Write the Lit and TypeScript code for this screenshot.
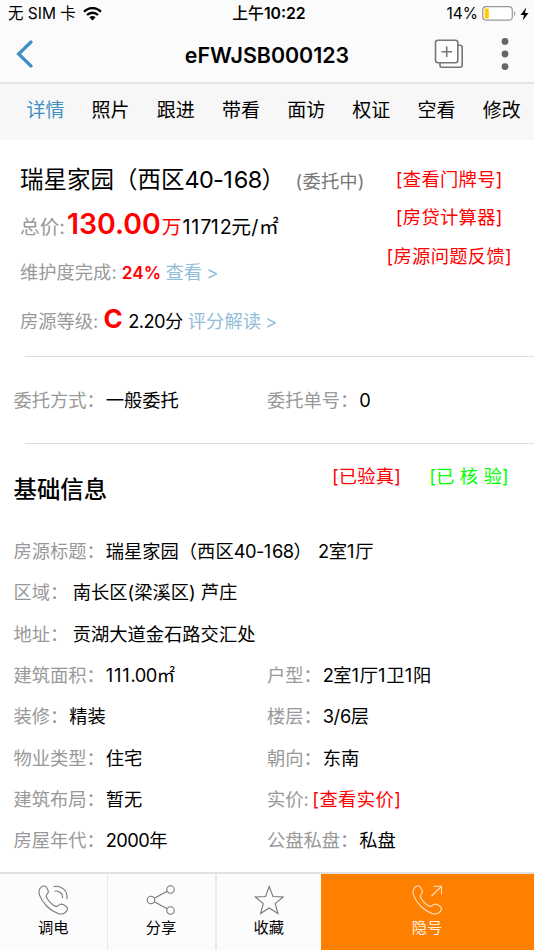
import { LitElement, html, css, svg } from "lit";
import { customElement } from "lit/decorators.js";
import { classMap } from "lit/directives/class-map.js";

type Field = { label: string; value: string; gap?: boolean; link?: boolean };

const TABS = ["详情", "照片", "跟进", "带看", "面访", "权证", "空看", "修改"];

const FIELDS: Field[][] = [
  [{ label: "房源标题：", value: "瑞星家园（西区40-168） 2室1厅" }],
  [{ label: "区域：", value: "南长区(梁溪区) 芦庄", gap: true }],
  [{ label: "地址：", value: "贡湖大道金石路交汇处", gap: true }],
  [{ label: "建筑面积：", value: "111.00㎡" }, { label: "户型：", value: "2室1厅1卫1阳" }],
  [{ label: "装修：", value: "精装" }, { label: "楼层：", value: "3/6层" }],
  [{ label: "物业类型：", value: "住宅" }, { label: "朝向：", value: "东南" }],
  [{ label: "建筑布局：", value: "暂无" }, { label: "实价:", value: "[查看实价]", link: true }],
  [{ label: "房屋年代：", value: "2000年" }, { label: "公盘私盘：", value: "私盘" }],
];

const HANDSET = "M3.2 2.2C5 .7 7.200 .5 8.400 2.200C9.600 4 10.600 6 10.200 7.600C9.800 9 8 9.600 8.200 11.200C8.800 14.600 14.500 20.600 18.200 21.400C19.800 21.600 20.800 19.600 22.400 19.200C24.400 18.700 26.800 20.200 28.400 21.600C30 23.200 29.600 25 28.200 26.600C26.200 28.900 23 29.500 20 28.500C12.600 26.200 4.400 18.200 1.600 10.400C.5 7.200 .8 4.200 3.200 2.200Z";

const ICONS = {
  call: svg`<path d=${HANDSET}/><path d="M15.500 1.800C22.500-.6 30.500 5.800 28.800 14.200M16.600 6.200C21.500 5.200 25.400 9 24.400 13.200"/>`,
  share: svg`<circle cx="5" cy="15" r="3.700"/><circle cx="24.500" cy="4.500" r="3.700"/><circle cx="24.500" cy="25.500" r="3.700"/><path d="M8.300 13.200 21.200 6.300M8.300 16.800 21.200 23.700"/>`,
  star: svg`<path d="M15.200 1.500 19 11.500 29.200 12 21.200 18.700 23.900 28.500 15.200 23 6.600 28.500 9.300 18.700 1.300 12 11.500 11.500Z"/>`,
  out: svg`<path d=${HANDSET}/><path d="M19.500 11 29.500 1.300M21.500 1.200H29.600V9.400"/>`,
};

// Wraps digits so that narrow and wide figures get even spacing.
const figures = (text: string) =>
  text.split(/(1+|[02-9.\-]+)/).filter(Boolean).map((part) =>
    /^1/.test(part) ? html`<span class="one">${part}</span>` : /^[0-9.\-]/.test(part) ? html`<span class="num">${part}</span>` : part
  );

@customElement("app-root")
export class AppRoot extends LitElement {
  static styles = css`
    :host {
      display: flex;
      flex-direction: column;
      height: 950px;
      overflow: hidden;
      background: #fff;
      color: #000;
      font-family: Inter, "Noto Sans CJK SC", sans-serif;
      font-size: 18.3px;
      white-space: nowrap;
    }
    * { box-sizing: border-box; }
    .num { letter-spacing: -.03em; }
    .one { letter-spacing: .045em; }
    .status {
      display: grid;
      grid-template-columns: 1fr auto 1fr;
      align-items: center;
      height: 28px;
      padding: 0 5px 0 8px;
      background: #fbfbfb;
      font-size: 15.500px;
      line-height: 20px;
    }
    .carrier, .power { display: flex; align-items: center; }
    .carrier svg { margin: -1px 0 0 7px; }
    .power { justify-content: flex-end; gap: 4px; }
    .clock { font-size: 15.800px; font-weight: 500; padding-left: 1px; }
    .clock b { font-weight: 600; }
    .nav {
      display: grid;
      grid-template-columns: 1fr auto 1fr;
      align-items: center;
      height: 56px;
      padding-bottom: 2px;
      background: #fbfbfb;
      border-bottom: 2px solid #e3e3e3;
    }
    .back { margin-left: 16px; }
    .title { font-size: 21.400px; font-weight: 600; margin-top: 1px; }
    .tools { display: flex; justify-content: flex-end; align-items: center; gap: 37px; margin-right: 25.500px; }
    .tabs {
      display: flex;
      height: 56px;
      padding-left: 12.800px;
      background: #f7f7f7;
    }
    .tab { flex: 0 0 65.200px; text-align: center; font-size: 19px; line-height: 54px; }
    .tab.on { color: #3e8fc2; }
    .summary {
      display: flex;
      justify-content: space-between;
      height: 216px;
      padding: 20px 22px 0 20px;
    }
    .line { display: flex; align-items: baseline; }
    .l1 { height: 43px; line-height: 40px; }
    .l2 { height: 46px; line-height: 41px; }
    .l3 { height: 46px; line-height: 47px; }
    .l4 { height: 50px; line-height: 47px; }
    .name { font-size: 23.500px; }
    .state { color: #777; margin-left: 10.500px; letter-spacing: .2px; }
    .muted { color: #999; }
    .red { color: #f00; }
    .green { color: #0f0; }
    .mid { font-size: 19.700px; }
    .price { font-size: 28.400px; font-weight: 600; margin: 0 1px 0 2px; }
    .per { margin-left: 1px; letter-spacing: .5px; }
    .strong { font-size: 17.300px; font-weight: 600; margin-left: 5px; }
    .grade { font-size: 26px; font-weight: 700; margin: 0 5.500px 0 5px; }
    .blue { color: #92bdd8; margin-left: 4.500px; word-spacing: -1px; }
    .links { color: #f00; text-align: center; line-height: 38.300px; letter-spacing: .3px; }
    .rule { height: 1px; margin-left: 25px; background: #dedede; }
    .row { display: grid; grid-template-columns: 253.500px 1fr; padding-left: 13.500px; line-height: 41.350px; height: 41.350px; }
    .cell { display: flex; align-items: baseline; }
    .value { margin-left: .8px; word-spacing: 1px; }
    .value.gap { margin-left: 4.300px; word-spacing: 0; }
    .value.red { margin-left: 3.500px; letter-spacing: .4px; }
    .entrust { height: 86px; padding-top: 22.500px; }
    .section { display: flex; height: 87px; padding: 0 25px 0 13.500px; }
    .heading { font-size: 23.400px; font-weight: 500; line-height: 91px; flex: 1; }
    .tag { line-height: 65px; margin-left: 28px; letter-spacing: .2px; }
    .bar {
      display: flex;
      height: 78px;
      margin-top: auto;
      border-top: 2px solid #e0e0e0;
      background: #fcfcfc;
      font-size: 15.300px;
    }
    .action {
      display: flex;
      flex-direction: column;
      align-items: center;
      flex: 0 0 107.500px;
      padding-top: 11px;
      border-right: 1px solid #e9e9e9;
      line-height: 22px;
    }
    .action svg { margin-bottom: 2px; stroke: #777; }
    .action.wide { border-right-width: 2px; flex-basis: 109px; }
    .action.last { border: 0; flex-basis: 104.500px; }
    .action.hot { flex: 1; border: 0; background: #ff8000; color: #fff0e0; padding-right: 1px; }
    .action.hot svg { stroke: #ffe3c7; }
  `;

  private field(f: Field) {
    return html`<div class="cell"><span class="muted">${f.label}</span><span class=${classMap({ value: true, gap: !!f.gap, red: !!f.link })}>${figures(f.value)}</span></div>`;
  }

  private action(icon: unknown, text: string, kind = "") {
    return html`<div class="action ${kind}"><svg width="30" height="30" viewBox="0 0 30 30" fill="none" stroke-width="1.100">${icon}</svg><span>${text}</span></div>`;
  }

  render() {
    return html`<div class="status"><div class="carrier"><span>无 SIM 卡</span><svg width="19" height="14" viewBox="0 0 19 14" fill="none" stroke="#000" stroke-width="2.300"><path d="M1 4.800C6-.1 13-.1 18 4.800M4 8C7.200 5 11.800 5 15 8"/><path d="M6.400 10.300C8.200 8.700 10.800 8.700 12.600 10.300L9.500 13.400Z" fill="#000" stroke="none"/></svg></div><span class="clock">上午<b>10:22</b></span><div class="power"><span>14%</span><svg width="34" height="16" viewBox="0 0 34 16"><rect x=".7" y=".7" width="29.600" height="13.500" rx="3.500" fill="#fff" stroke="#999" stroke-width="1.200"/><rect x="2.600" y="2.500" width="4.200" height="10" rx="1" fill="#fc0"/><path d="M32 5C33.600 5.500 33.600 9.500 32 10Z" fill="#999"/></svg><svg width="9" height="14" viewBox="0 0 9 14"><path d="M6.200.5.500 7.900H4L2.700 13.500 8.500 5.900H5Z"/></svg></div></div>
      <div class="nav"><svg class="back" width="18" height="28" viewBox="0 0 18 28" fill="none" stroke="#3e8fc2" stroke-width="3.200" stroke-linecap="round"><path d="M15 2 2.600 14 15 26"/></svg><span class="title">eFWJSB000123</span><div class="tools"><svg width="30" height="30" viewBox="0 0 30 30" fill="none" stroke="#777" stroke-width="1.600"><path d="M6 24V26.500Q6 28.200 8 28.200H26Q28.200 28.200 28.200 26V8.500Q28.200 6.300 26 6.300H24"/><rect x="1.500" y="1.300" width="22.300" height="22.500" rx="2.500" fill="#fff"/><path d="M12.700 7.500V18M7.500 12.700H18"/></svg><svg width="8" height="34" viewBox="0 0 8 34" fill="#666"><circle cx="4" cy="4.400" r="3.400"/><circle cx="4" cy="17" r="3.400"/><circle cx="4" cy="29.600" r="3.400"/></svg></div></div>
      <div class="tabs">${TABS.map((t, i) => html`<span class=${classMap({ tab: true, on: i === 0 })}>${t}</span>`)}</div>
      <div class="summary"><div>
        <div class="line l1"><span class="name">${figures("瑞星家园（西区40-168）")}</span><span class="state">(委托中)</span></div>
        <div class="line l2"><span class="mid muted">总价:</span><span class="price red">130.00</span><span class="mid red">万</span><span class="mid per">${figures("11712元/㎡")}</span></div>
        <div class="line l3"><span class="muted">维护度完成:</span><span class="strong red">24%</span><span class="blue">查看 &gt;</span></div>
        <div class="line l4"><span class="muted">房源等级:</span><span class="grade red">C</span><span>${figures("2.20分")}</span><span class="blue">评分解读 &gt;</span></div>
      </div><div class="links"><div>[查看门牌号]</div><div>[房贷计算器]</div><div>[房源问题反馈]</div></div></div>
      <div class="rule"></div>
      <div class="row entrust">${this.field({ label: "委托方式：", value: "一般委托" })}${this.field({ label: "委托单号：", value: "0" })}</div>
      <div class="rule"></div>
      <div class="section"><span class="heading">基础信息</span><span class="tag red">[已验真]</span><span class="tag green">[已 核 验]</span></div>
      ${FIELDS.map((r) => html`<div class="row">${r.map((f) => this.field(f))}</div>`)}
      <div class="bar">${this.action(ICONS.call, "调电")}${this.action(ICONS.share, "分享", "wide")}${this.action(ICONS.star, "收藏", "last")}${this.action(ICONS.out, "隐号", "hot")}</div>`;
  }
}
